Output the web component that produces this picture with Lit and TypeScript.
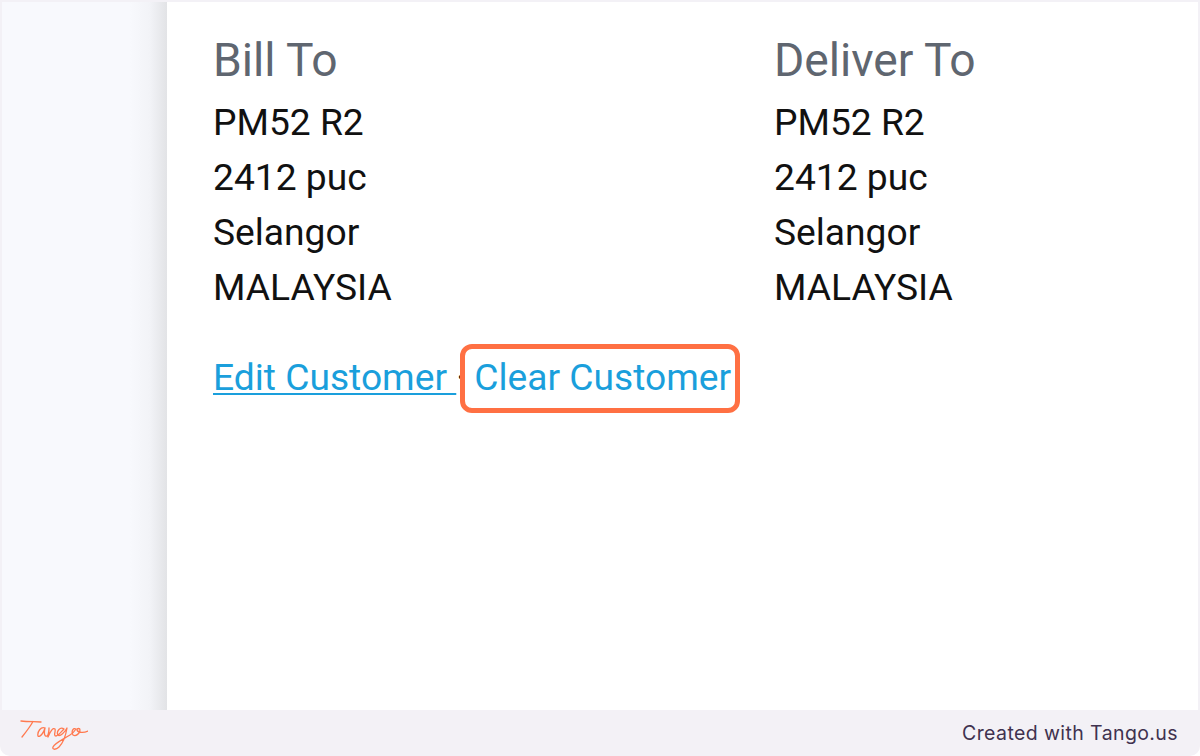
import { LitElement, html, css } from "lit";
import { customElement } from "lit/decorators.js";

const lines = ["PM52 R2", "2412 puc", "Selangor", "MALAYSIA"];

@customElement("app-root")
export class AppRoot extends LitElement {
  static styles = css`
    :host { display: block; width: 1200px; height: 756px; background: #fff; overflow: hidden; }
    .frame { height: 756px; display: flex; flex-direction: column; background: #f3f1f6; border-radius: 0 0 10px 10px; box-sizing: border-box; }
    .main { flex: 1; min-height: 0; display: flex; margin: 2px 2px 0 2px; background: #fff; }
    .side { width: 165px; flex: none; background: linear-gradient(90deg, #f8f9fd 0, #f8f9fd 128px, #f2f3f7 148px, #e2e3e6 165px); }
    .content { flex: 1; padding: 32px 0 0 46px; font-family: Roboto, "Liberation Sans", sans-serif; color: #111; }
    .cols { display: grid; grid-template-columns: 561px 1fr; }
    h2 { margin: 0 0 8.6px; font-size: 46.2px; line-height: 52px; font-weight: 400; color: #5f6670; }
    .line { font-size: 37.2px; line-height: 55.3px; }
    .links { margin-top: 34.2px; font-size: 37.2px; line-height: 55.5px; white-space: pre; color: #111; }
    a { color: #1a9fdc; }
    .edit { text-decoration: underline; text-underline-offset: 3px; text-decoration-thickness: 1.5px; }
    .sep { display: inline-block; width: 18px; }
    .clear { position: relative; display: inline-block; }
    .mark { position: absolute; left: -14px; right: -9px; top: -6px; bottom: -8px; border: 5px solid #ff7043; border-radius: 12px; }
    footer { height: 46px; flex: none; display: flex; align-items: center; justify-content: space-between; padding: 0 22px 0 20px; }
    .brand { font-family: "Inter", "Noto Sans", sans-serif; font-size: 19.5px; letter-spacing: 0.4px; color: #40324f; }
    svg { display: block; margin-top: 4px; }
  `;

  private column(title: string) {
    return html`<div>
      <h2>${title}</h2>
      ${lines.map((l) => html`<div class="line">${l}</div>`)}
    </div>`;
  }

  render() {
    return html`<div class="frame">
      <div class="main">
        <div class="side"></div>
        <div class="content">
          <div class="cols">${this.column("Bill To")}${this.column("Deliver To")}</div>
          <div class="links"><a class="edit">Edit Customer </a><span class="sep">·</span><a class="clear">Clear Customer<span class="mark"></span></a></div>
        </div>
      </div>
      <footer>
        <svg width="68" height="32" viewBox="0 0 68 32" fill="none" stroke="#ff7a50" stroke-width="1.3" stroke-linecap="round" stroke-linejoin="round" aria-label="Tango">
          <path d="M1 2C8 3 15 2.5 21 3M13 2.5C10 8 6 13 2 18" />
          <path d="M25 9C21 7 17 13 18 17C20 19 24 13 25 9C24 13 24 18 27 17C28 17 29 13 29 9C29 13 28 16 28 18C30 13 33 8 35 10C36 12 33 17 36 17C38 17 41 13 44 10C40 7 36 13 38 16C40 18 45 13 47 9C46 15 43 24 39 28C36 31 32 31 33 28C35 24 42 21 50 16C52 15 54 13 56 10C53 8 51 13 53 16C56 18 60 14 60 11C60 9 57 9 57 11C58 14 64 14 68 12" />
        </svg>
        <span class="brand">Created with Tango.us</span>
      </footer>
    </div>`;
  }
}
